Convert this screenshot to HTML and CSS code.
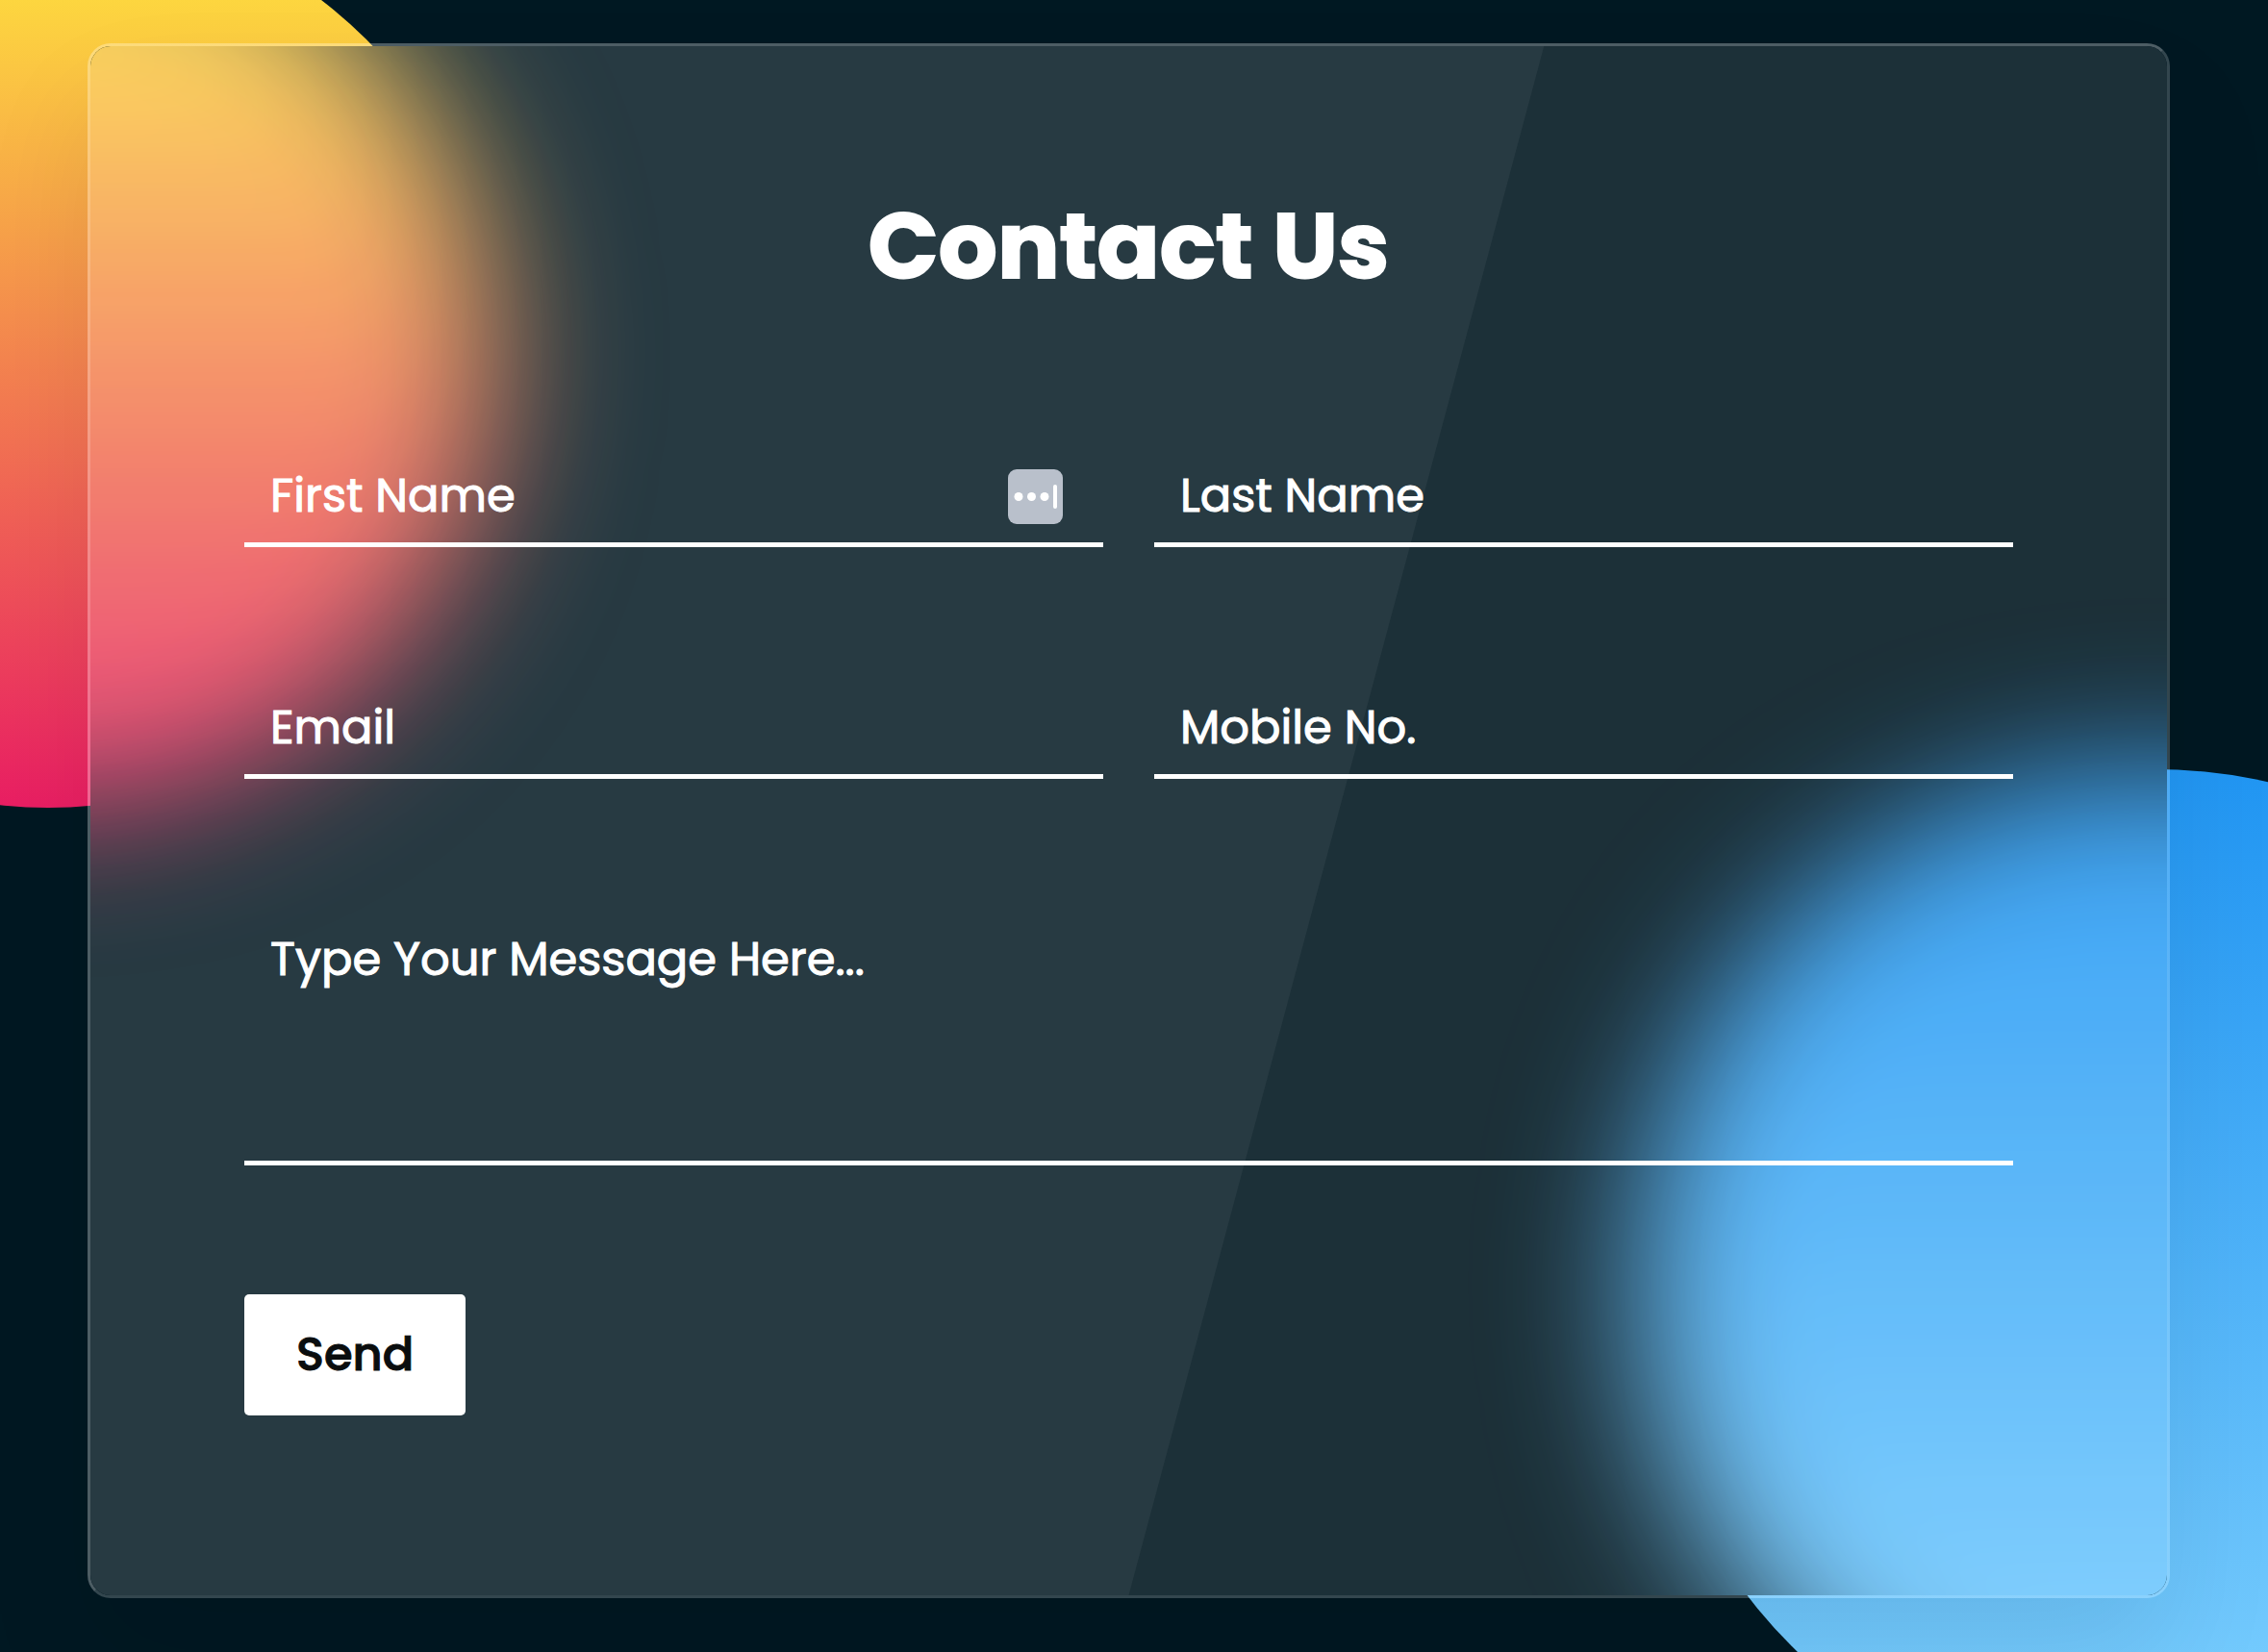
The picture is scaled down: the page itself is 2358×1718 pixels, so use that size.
FILE: index.html
```html
<!DOCTYPE html>
<html lang="en">
<head>
<meta charset="utf-8">
<meta name="viewport" content="width=device-width, initial-scale=1">
<title>Contact Us</title>
<link rel="stylesheet" href="styles.css">
</head>
<body>
<main class="page">
  <div class="disc disc-sunset"></div>
  <div class="disc disc-sky"></div>
  <section class="card">
    <div class="glass" aria-hidden="true">
      <div class="disc disc-sunset"></div>
      <div class="disc disc-sky"></div>
    </div>
    <h2 class="title">Contact Us</h2>
    <form class="form">
      <div class="fields">
        <div class="field">
          <input class="control" type="text" name="first" placeholder="First Name" aria-label="First Name">
          <svg class="autofill" viewBox="0 0 57 57" aria-hidden="true">
            <rect width="57" height="57" rx="9" fill="#b9c0cb"/>
            <g fill="#fff">
              <circle cx="11" cy="28.500" r="4.500"/>
              <circle cx="24.500" cy="28.500" r="4.500"/>
              <circle cx="38" cy="28.500" r="4.500"/>
              <rect x="47" y="16" width="4" height="25" rx="2"/>
            </g>
          </svg>
        </div>
        <div class="field">
          <input class="control" type="text" name="last" placeholder="Last Name" aria-label="Last Name">
        </div>
        <div class="field">
          <input class="control" type="email" name="email" placeholder="Email" aria-label="Email">
        </div>
        <div class="field">
          <input class="control" type="tel" name="mobile" placeholder="Mobile No." aria-label="Mobile No.">
        </div>
        <div class="field wide">
          <textarea class="control message" name="message" placeholder="Type Your Message Here..." aria-label="Type Your Message Here..."></textarea>
        </div>
      </div>
      <button class="send" type="submit">Send</button>
    </form>
  </section>
</main>
</body>
</html>
```

FILE: styles.css
```css
* {
  box-sizing: border-box;
  margin: 0;
}

body {
  background: #001822;
  font-family: Poppins, Inter, "Liberation Sans", sans-serif;
}

.page {
  position: relative;
  min-height: 100vh;
  padding: 45px 102px 56px 91px;
  overflow: hidden;
}

/* Two glowing discs behind the card */
.disc {
  position: absolute;
  border-radius: 50%;
}

.disc-sunset {
  top: -96px;
  left: -418px;
  width: 936px;
  height: 936px;
  background: linear-gradient(#ffeb3b, #e91e63);
}

.disc-sky {
  right: -416px;
  bottom: -150px;
  width: 1068px;
  height: 1068px;
  background: linear-gradient(#2196f3, #80d2ff);
}

.card {
  position: relative;
  z-index: 1;
  padding: 136px 160px 187px;
  border: 3px solid rgba(255, 255, 255, 0.2);
  border-top-color: rgba(255, 255, 255, 0.3);
  border-left-color: rgba(255, 255, 255, 0.3);
  border-radius: 24px;
  box-shadow: 0 64px 120px rgba(0, 0, 0, 0.08);
}

/* Frosted pane: the same discs, blurred, under a light tint */
.glass {
  position: absolute;
  inset: 0;
  z-index: -2;
  overflow: hidden;
  border-radius: 21px;
  background: #001720;
}

.glass .disc {
  filter: blur(76px);
}

.glass .disc-sunset {
  top: -144px;
  left: -512px;
}

.glass .disc-sky {
  right: -521px;
  bottom: -209px;
}

.glass::after {
  content: "";
  position: absolute;
  inset: 0;
  background: rgba(255, 255, 255, 0.11);
}

/* Slanted sheen over the left part of the glass */
.card::before {
  content: "";
  position: absolute;
  inset: 0;
  z-index: -1;
  border-radius: 21px;
  background: rgba(255, 255, 255, 0.05);
  clip-path: polygon(0 0, 70% 0, 50% 100%, 0 100%);
}

.title {
  margin-bottom: 138px;
  color: #fff;
  font-size: 96px;
  font-weight: 700;
  line-height: 144px;
  text-align: center;
  -webkit-text-stroke: 2px #fff;
}

.fields {
  display: grid;
  grid-template-columns: 1fr 1fr;
  gap: 138px 53px;
}

.field {
  position: relative;
}

.wide {
  grid-column: 1 / -1;
}

.control {
  display: block;
  width: 100%;
  height: 103px;
  padding: 14px 27px 12px;
  border: 0;
  border-bottom: 5px solid #fff;
  border-radius: 0;
  outline: 0;
  background: transparent;
  color: #fff;
  font: inherit;
  font-size: 48px;
  line-height: 72px;
  resize: none;
}

.control::placeholder {
  color: #fff;
  opacity: 1;
  -webkit-text-stroke: 1px #fff;
}

.message {
  height: 264px;
}

.autofill {
  position: absolute;
  top: 22px;
  right: 42px;
  width: 57px;
  height: 57px;
}

.send {
  display: block;
  margin-top: 134px;
  padding: 27px 54px;
  border: 0;
  border-radius: 5px;
  background: #fff;
  color: #0a0d0e;
  font: inherit;
  font-size: 48px;
  font-weight: 500;
  line-height: 72px;
  -webkit-text-stroke: 1px #0a0d0e;
}
```
